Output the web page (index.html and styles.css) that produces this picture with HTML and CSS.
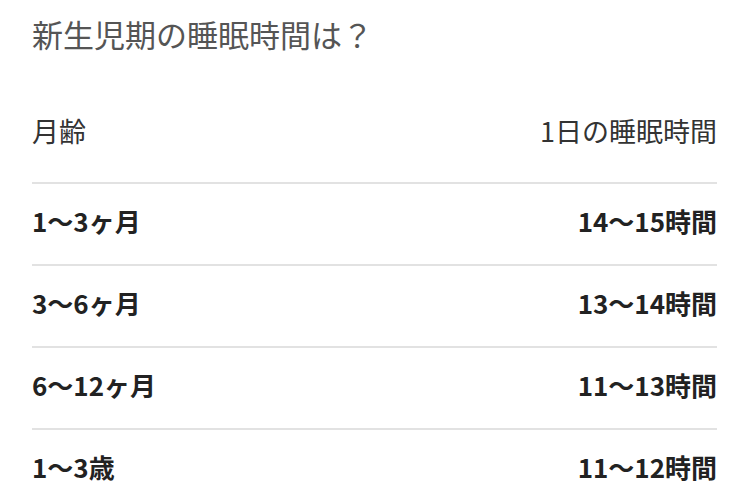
FILE: index.html
```html
<!DOCTYPE html>
<html lang="ja">
<head>
<meta charset="utf-8">
<link rel="stylesheet" href="styles.css">
</head>
<body>
<div class="page">
  <h1 class="title">新生児期の睡眠時間は？</h1>
  <div class="table">
    <div class="row head"><span>月齢</span><span>1日の睡眠時間</span></div>
    <div class="row"><span>1〜3ヶ月</span><span>14〜15時間</span></div>
    <div class="row"><span>3〜6ヶ月</span><span>13〜14時間</span></div>
    <div class="row"><span>6〜12ヶ月</span><span>11〜13時間</span></div>
    <div class="row last"><span>1〜3歳</span><span>11〜12時間</span></div>
  </div>
</div>
</body>
</html>
```

FILE: styles.css
```css
html, body {
  margin: 0;
  padding: 0;
  background: #fff;
}
.page {
  width: 685px;
  padding-left: 32px;
  font-family: "Noto Sans CJK JP", "Noto Sans", sans-serif;
}
.title {
  margin: 0;
  padding-top: 16px;
  font-size: 31px;
  line-height: 36px;
  font-weight: 400;
  color: #555;
}
.row {
  display: flex;
  justify-content: space-between;
  font-size: 26px;
  line-height: 30px;
  font-weight: 700;
  color: #222;
  padding: 22px 0 28px;
  border-bottom: 2px solid #e2e2e2;
}
.row.head {
  font-size: 27px;
  font-weight: 400;
  color: #333;
  padding: 64px 0 36px;
}
.row.last {
  border-bottom: none;
}
```
